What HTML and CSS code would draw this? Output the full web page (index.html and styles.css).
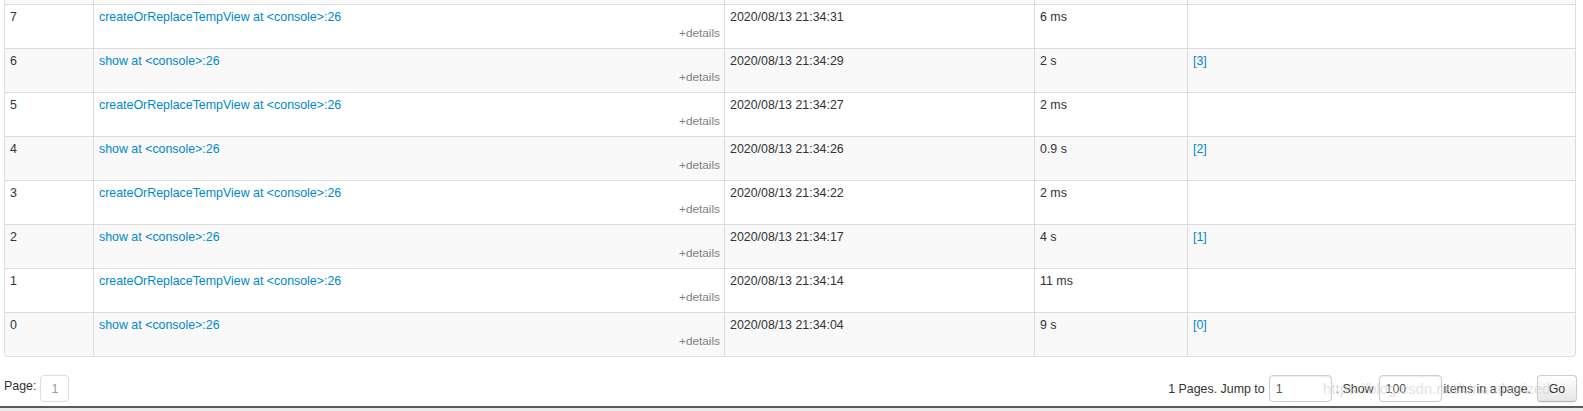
FILE: index.html
```html
<!DOCTYPE html>
<html lang="en">
<head>
<meta charset="utf-8">
<title>Spark Jobs</title>
<link rel="stylesheet" href="styles.css">
</head>
<body>
<div class="page">
  <div class="jobs">
    <div class="row cut"><div class="c"></div><div class="c"></div><div class="c"></div><div class="c"></div><div class="c"></div></div>
    <div class="row">
      <div class="c">7</div>
      <div class="c desc"><a class="name" href="#">createOrReplaceTempView at &lt;console&gt;:26</a><span class="details">+details</span></div>
      <div class="c">2020/08/13 21:34:31</div>
      <div class="c">6 ms</div>
      <div class="c"></div>
    </div>
    <div class="row">
      <div class="c">6</div>
      <div class="c desc"><a class="name" href="#">show at &lt;console&gt;:26</a><span class="details">+details</span></div>
      <div class="c">2020/08/13 21:34:29</div>
      <div class="c">2 s</div>
      <div class="c"><a class="link" href="#">[3]</a></div>
    </div>
    <div class="row">
      <div class="c">5</div>
      <div class="c desc"><a class="name" href="#">createOrReplaceTempView at &lt;console&gt;:26</a><span class="details">+details</span></div>
      <div class="c">2020/08/13 21:34:27</div>
      <div class="c">2 ms</div>
      <div class="c"></div>
    </div>
    <div class="row">
      <div class="c">4</div>
      <div class="c desc"><a class="name" href="#">show at &lt;console&gt;:26</a><span class="details">+details</span></div>
      <div class="c">2020/08/13 21:34:26</div>
      <div class="c">0.9 s</div>
      <div class="c"><a class="link" href="#">[2]</a></div>
    </div>
    <div class="row">
      <div class="c">3</div>
      <div class="c desc"><a class="name" href="#">createOrReplaceTempView at &lt;console&gt;:26</a><span class="details">+details</span></div>
      <div class="c">2020/08/13 21:34:22</div>
      <div class="c">2 ms</div>
      <div class="c"></div>
    </div>
    <div class="row">
      <div class="c">2</div>
      <div class="c desc"><a class="name" href="#">show at &lt;console&gt;:26</a><span class="details">+details</span></div>
      <div class="c">2020/08/13 21:34:17</div>
      <div class="c">4 s</div>
      <div class="c"><a class="link" href="#">[1]</a></div>
    </div>
    <div class="row">
      <div class="c">1</div>
      <div class="c desc"><a class="name" href="#">createOrReplaceTempView at &lt;console&gt;:26</a><span class="details">+details</span></div>
      <div class="c">2020/08/13 21:34:14</div>
      <div class="c">11 ms</div>
      <div class="c"></div>
    </div>
    <div class="row">
      <div class="c">0</div>
      <div class="c desc"><a class="name" href="#">show at &lt;console&gt;:26</a><span class="details">+details</span></div>
      <div class="c">2020/08/13 21:34:04</div>
      <div class="c">9 s</div>
      <div class="c"><a class="link" href="#">[0]</a></div>
    </div>
  </div>

  <div class="pager">
    <div class="pager-left">
      <span class="page-label">Page:</span>
      <span class="page-box">1</span>
    </div>
    <form class="pager-right">
      <label class="lbl">1 Pages. Jump to</label>
      <input class="num" type="text" value="1">
      <label class="lbl show">. Show</label>
      <input class="num" type="text" value="100">
      <label class="lbl items">items in a page.</label>
      <button class="btn" type="button">Go</button>
    </form>
    <span class="watermark">https://blog.csdn.net/Unauthorized</span>
  </div>
</div>
<div class="edge"></div>
</body>
</html>
```

FILE: styles.css
```css
html, body {
  margin: 0;
  padding: 0;
  background: #fff;
}

body {
  font-family: "Liberation Sans", Arial, Helvetica, sans-serif;
  font-size: 12.4px;
  color: #333;
  overflow: hidden;
}

.page {
  width: 1572px;
  padding: 0 7px 0 4px;
}

/* ---------- jobs table ---------- */
.jobs {
  border-left: 1px solid #ddd;
  border-right: 1px solid #ddd;
  border-bottom: 1px solid #ddd;
  border-radius: 0 0 4px 4px;
  overflow: hidden;
}

.row {
  display: grid;
  grid-template-columns: 88px 631px 310px 153px 388px;
  height: 44px;
}

.row:nth-child(odd) {
  background: #f9f9f9;
}

.row.cut {
  height: 4px;
}

.c {
  box-sizing: border-box;
  border-top: 1px solid #ddd;
  border-left: 1px solid #ddd;
  padding: 3px 5px 0;
  line-height: 18px;
  white-space: nowrap;
}

.c:first-child {
  border-left: 0;
}

.cut .c {
  border-top: 0;
  padding: 0;
}

.desc {
  display: flex;
  flex-direction: column;
}

.name,
.link {
  color: #0088cc;
  text-decoration: none;
}

.details {
  align-self: flex-end;
  font-size: 11.8px;
  line-height: 14px;
  color: #808080;
  margin-right: -1px;
}

/* ---------- pagination ---------- */
.pager {
  position: relative;
  display: flex;
  justify-content: space-between;
  margin-top: 18px;
  height: 27px;
}

.pager-left {
  display: flex;
  align-items: flex-start;
  gap: 4px;
}

.page-label {
  padding-top: 2px;
  line-height: 18px;
}

.page-box {
  box-sizing: border-box;
  width: 29px;
  height: 27px;
  border: 1px solid #ddd;
  border-radius: 4px;
  color: #999;
  background: #fff;
  display: flex;
  align-items: center;
  justify-content: center;
  line-height: 18px;
}

.pager-right {
  display: flex;
  align-items: center;
  margin: 0 -1px 0 0;
}

.lbl {
  line-height: 18px;
}

.num {
  box-sizing: border-box;
  width: 63px;
  height: 27px;
  margin: 0 4px;
  padding: 0 6px;
  border: 1px solid #ccc;
  border-radius: 4px;
  box-shadow: inset 0 1px 1px rgba(0, 0, 0, 0.075);
  font-family: "Liberation Sans", Arial, sans-serif;
  font-size: 12.4px;
  color: #555;
  background: #fff;
}

.show {
  margin-right: 1px;
}

.items {
  margin-left: -2px;
  margin-right: 6px;
}

.btn {
  box-sizing: border-box;
  width: 40px;
  height: 27px;
  padding: 0;
  border: 1px solid #ccc;
  border-bottom-color: #b3b3b3;
  border-radius: 4px;
  background: linear-gradient(to bottom, #ffffff, #e6e6e6);
  box-shadow: inset 0 1px 0 rgba(255, 255, 255, 0.2), 0 1px 2px rgba(0, 0, 0, 0.05);
  font-family: "Liberation Sans", Arial, sans-serif;
  font-size: 12.4px;
  color: #333;
}

.watermark {
  position: absolute;
  left: 1319px;
  top: 5px;
  font-size: 15px;
  line-height: 18px;
  color: rgba(205, 205, 205, 0.6);
  white-space: nowrap;
  pointer-events: none;
}

/* ---------- bottom window edge ---------- */
.edge {
  margin-top: 4px;
  height: 3px;
  border-top: 2px solid #5a5a5a;
  background: #ececec;
}
```
